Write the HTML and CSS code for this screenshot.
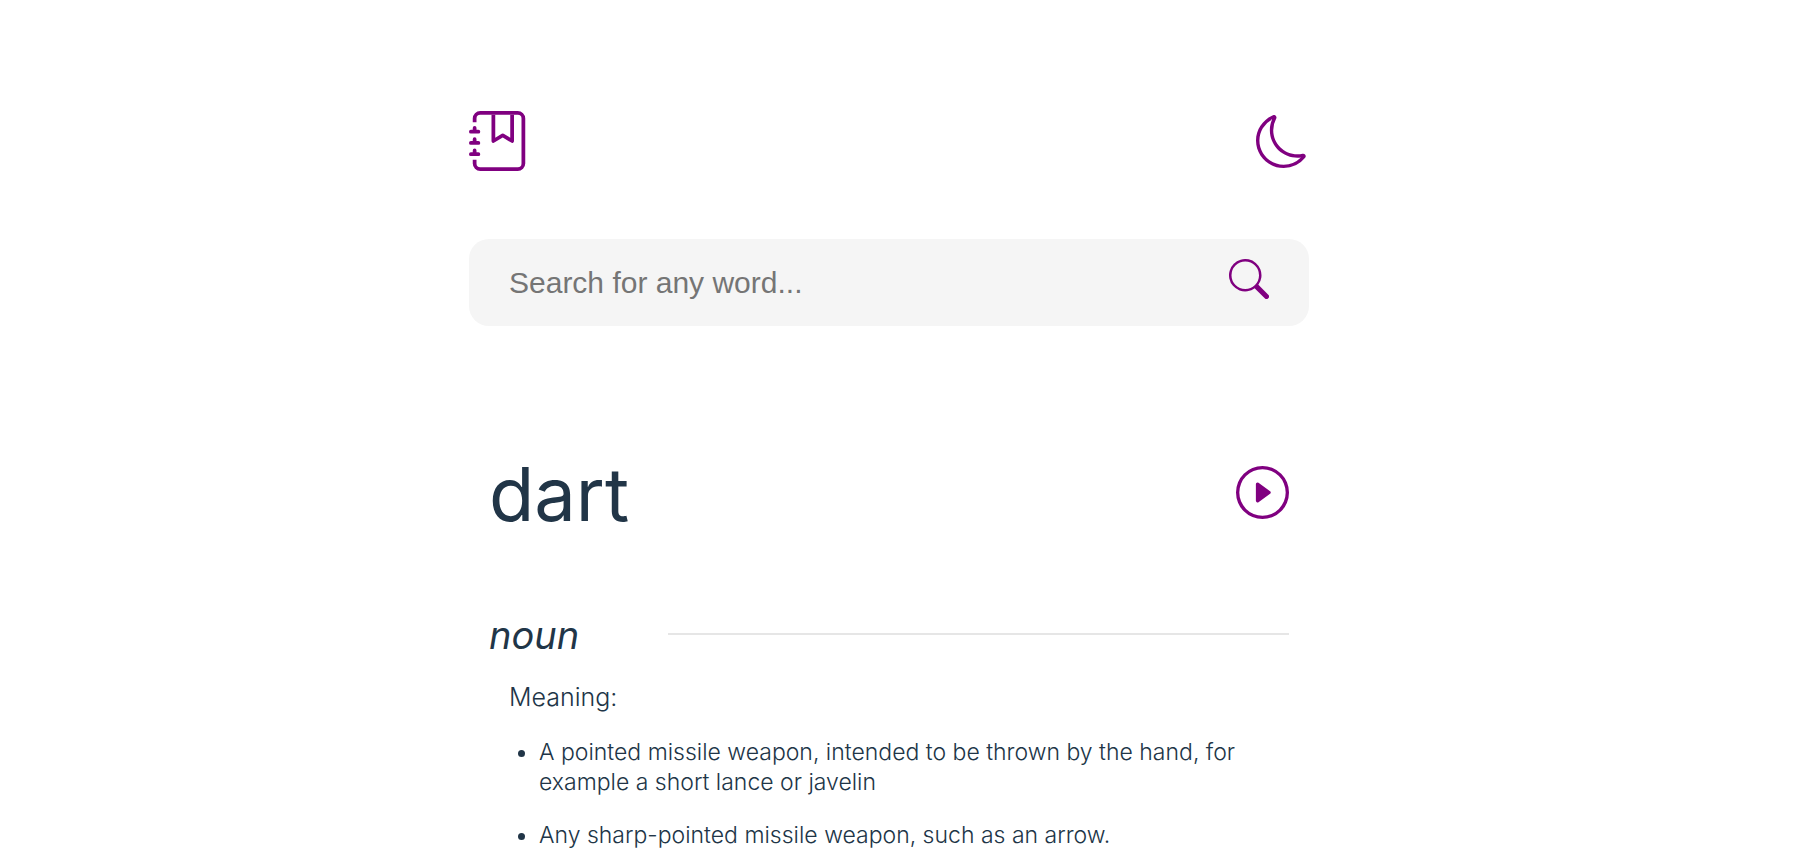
FILE: index.html
```
<!DOCTYPE html>
<html lang="en">
<head>
<meta charset="utf-8">
<meta name="viewport" content="width=device-width, initial-scale=1">
<title>Dictionary</title>
<link rel="stylesheet" href="styles.css">
</head>
<body>
<div class="app">
  <header class="topbar">
    <a class="logo" href="#" aria-label="Dictionary home">
      <svg class="icon icon-logo" viewBox="0 0 16 16" aria-hidden="true"><path d="M6 8V1h1v6.117L8.743 6.07a.5.5 0 0 1 .514 0L11 7.117V1h1v7a.5.5 0 0 1-.757.429L9 7.083 6.757 8.43A.5.5 0 0 1 6 8z"/><path d="M3 0h10a2 2 0 0 1 2 2v12a2 2 0 0 1-2 2H3a2 2 0 0 1-2-2v-1h1v1a1 1 0 0 0 1 1h10a1 1 0 0 0 1-1V2a1 1 0 0 0-1-1H3a1 1 0 0 0-1 1v1H1V2a2 2 0 0 1 2-2z"/><path d="M1 5v-.5a.5.5 0 0 1 1 0V5h.5a.5.5 0 0 1 0 1h-2a.5.5 0 0 1 0-1H1zm0 3v-.5a.5.5 0 0 1 1 0V8h.5a.5.5 0 0 1 0 1h-2a.5.5 0 0 1 0-1H1zm0 3v-.5a.5.5 0 0 1 1 0v.5h.5a.5.5 0 0 1 0 1h-2a.5.5 0 0 1 0-1H1z"/></svg>
    </a>
    <button class="icon-button" type="button" aria-label="Toggle dark mode">
      <svg class="icon icon-moon" viewBox="0 0 16 16" aria-hidden="true"><path d="M6 .278a.768.768 0 0 1 .08.858 7.208 7.208 0 0 0-.878 3.46c0 4.021 3.278 7.277 7.318 7.277.527 0 1.04-.055 1.533-.16a.787.787 0 0 1 .81.316.733.733 0 0 1-.031.893A8.349 8.349 0 0 1 8.344 16C3.734 16 0 12.286 0 7.71 0 4.266 2.114 1.312 5.124.06A.752.752 0 0 1 6 .278zM4.858 1.311A7.269 7.269 0 0 0 1.025 7.71c0 4.02 3.279 7.276 7.319 7.276a7.316 7.316 0 0 0 5.205-2.162c-.337.042-.68.063-1.029.063-4.61 0-8.343-3.714-8.343-8.29 0-1.167.242-2.278.681-3.286z"/></svg>
    </button>
  </header>

  <form class="search" role="search">
    <input class="search-input" type="text" placeholder="Search for any word..." aria-label="Search for any word">
    <button class="icon-button search-button" type="submit" aria-label="Search">
      <svg class="icon icon-search" viewBox="0 0 16 16" aria-hidden="true"><path d="M11.742 10.344a6.5 6.5 0 1 0-1.397 1.398h-.001c.03.04.062.078.098.115l3.85 3.85a1 1 0 0 0 1.415-1.414l-3.85-3.85a1.007 1.007 0 0 0-.115-.1zM12 6.5a5.5 5.5 0 1 1-11 0 5.5 5.5 0 0 1 11 0z"/></svg>
    </button>
  </form>

  <main class="entry">
    <div class="word-row">
      <h1 class="word">dart</h1>
      <button class="icon-button" type="button" aria-label="Play pronunciation">
        <svg class="icon icon-play" viewBox="0 0 16 16" aria-hidden="true"><path d="M8 15A7 7 0 1 1 8 1a7 7 0 0 1 0 14zm0 1A8 8 0 1 0 8 0a8 8 0 0 0 0 16z"/><path d="M6.271 5.055a.5.5 0 0 1 .52.038l3.5 2.5a.5.5 0 0 1 0 .814l-3.5 2.5A.5.5 0 0 1 6 10.5v-5a.5.5 0 0 1 .271-.445z"/></svg>
      </button>
    </div>
    <section class="sense">
      <div class="sense-head">
        <h2 class="part">noun</h2>
        <hr class="rule">
      </div>
      <div class="sense-body">
        <h3 class="label">Meaning:</h3>
        <ul class="meanings">
          <li>A pointed missile weapon, intended to be thrown by the hand, for example a short lance or javelin</li>
          <li>Any sharp-pointed missile weapon, such as an arrow.</li>
        </ul>
      </div>
    </section>
  </main>
</div>
</body>
</html>
```
FILE: styles.css
```
* { box-sizing: border-box; }

body {
  margin: 0;
  padding: 111px 33px 0 0;
  background: #fff;
  color: #213547;
  font-family: Inter, "Liberation Sans", sans-serif;
  font-weight: 300;
}

.app {
  max-width: 840px;
  margin: 0 auto;
}

.icon {
  display: block;
  fill: #800080;
}
.icon-logo { width: 60px; height: 60px; }
.icon-moon { width: 53px; height: 53px; }
.icon-search { width: 40px; height: 40px; }
.icon-play { width: 53px; height: 53px; }

.icon-button {
  padding: 0;
  border: 0;
  background: none;
  cursor: pointer;
}

.topbar {
  display: flex;
  align-items: center;
  justify-content: space-between;
}

.search {
  display: flex;
  align-items: center;
  margin-top: 68px;
  padding: 0 40px;
  height: 87px;
  border-radius: 20px;
  background: #f5f5f5;
}
.search-input {
  flex: 1;
  min-width: 0;
  padding: 0;
  border: 0;
  outline: 0;
  background: none;
  font: 400 30px "Liberation Sans", Arial, sans-serif;
}
.search-input::placeholder { color: #757575; }
.search-button { padding-bottom: 8px; }

.entry {
  margin-top: 124px;
  padding: 0 20px;
}

.word-row {
  display: flex;
  align-items: center;
  justify-content: space-between;
}
.word-row .icon-button { padding-bottom: 4px; }
.word {
  margin: 0;
  font-size: 74px;
  font-weight: 400;
  line-height: 88px;
}

.sense { margin-top: 72px; }
.sense-head {
  display: flex;
  align-items: center;
}
.part {
  flex: 0 0 179px;
  margin: 0;
  padding-top: 2px;
  font-size: 38px;
  font-style: italic;
  font-weight: 400;
  line-height: 46px;
}
.rule {
  flex: 1;
  margin: 0;
  border: 0;
  border-top: 2px solid #e6e6e6;
}

.sense-body { padding: 24px 20px 0; }
.label {
  margin: 0;
  font-size: 25px;
  font-weight: 300;
  line-height: 30px;
}
.meanings {
  display: grid;
  gap: 23px;
  margin: 25px 0 0;
  padding: 0 0 0 30px;
  font-size: 23px;
  line-height: 30px;
}
```
